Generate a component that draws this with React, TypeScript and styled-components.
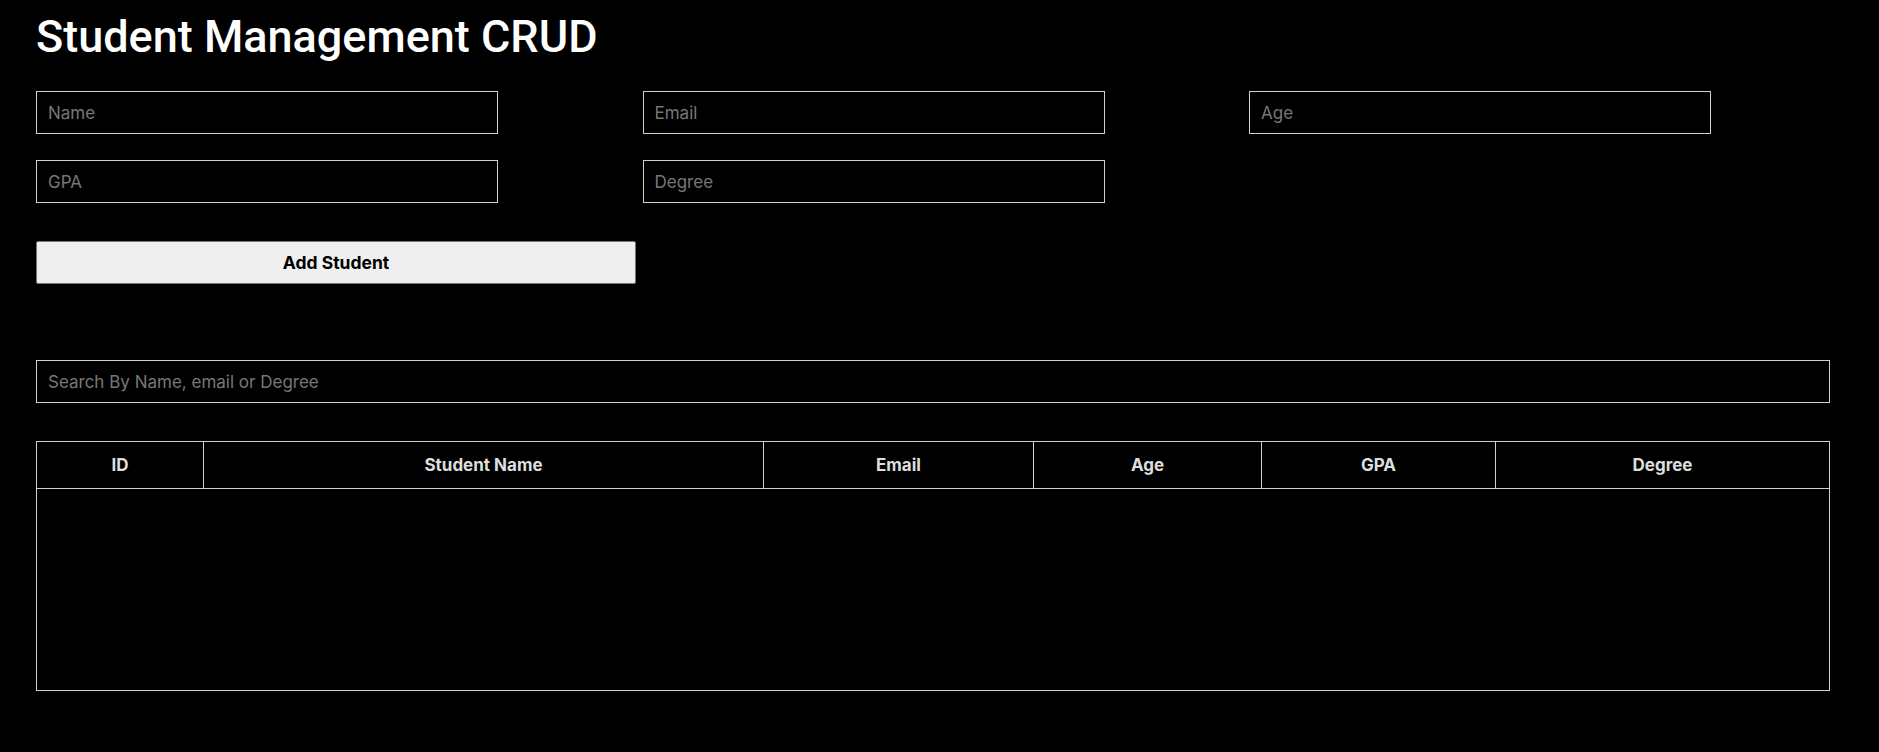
import React from "react";
import styled, { createGlobalStyle } from "styled-components";

const GlobalStyle = createGlobalStyle`
  html, body {
    margin: 0;
    padding: 0;
    background: #000;
  }
  body {
    font-family: Inter, "Liberation Sans", Arial, sans-serif;
    color: #fff;
  }
`;

const Page = styled.div`
  padding: 10px 49px 40px 36px;
  display: flex;
  flex-direction: column;
`;

const Title = styled.h1`
  margin: 0;
  font-family: Roboto, "Liberation Sans", Arial, sans-serif;
  font-size: 45px;
  font-weight: 500;
  line-height: 53px;
  color: #fff;
`;

const FormGrid = styled.div`
  margin-top: 28px;
  display: grid;
  grid-template-columns: repeat(3, 462px);
  column-gap: 144.5px;
  row-gap: 26px;
`;

const TextInput = styled.input<{ $wide?: boolean }>`
  box-sizing: border-box;
  width: ${(p) => (p.$wide ? "100%" : "462px")};
  height: 43px;
  padding: 0 11px;
  background: #000;
  border: 1px solid #cfcfcf;
  border-radius: 0;
  color: #fff;
  font-family: Inter, "Liberation Sans", Arial, sans-serif;
  font-size: 17px;
  outline: none;
  &::placeholder {
    color: #777;
  }
`;

const AddButton = styled.button`
  margin-top: 38px;
  box-sizing: border-box;
  width: 600px;
  height: 43px;
  background: #efefef;
  border: 1px solid #767676;
  border-radius: 2px;
  color: #000;
  font-family: Inter, "Liberation Sans", Arial, sans-serif;
  font-size: 17.5px;
  font-weight: 700;
  cursor: pointer;
`;

const SearchRow = styled.div`
  margin-top: 76px;
  display: flex;
`;

const TableFrame = styled.div`
  margin-top: 38px;
  box-sizing: border-box;
  height: 250px;
  border: 1px solid #cfcfcf;
`;

const Table = styled.table`
  width: 100%;
  table-layout: fixed;
  border-collapse: separate;
  border-spacing: 0;
`;

const Th = styled.th<{ $last?: boolean }>`
  padding: 0;
  line-height: 46px;
  border-bottom: 1px solid #cfcfcf;
  border-right: ${(p) => (p.$last ? "none" : "1px solid #cfcfcf")};
  font-family: Inter, "Liberation Sans", Arial, sans-serif;
  font-size: 17px;
  font-weight: 700;
  color: #dedede;
  text-align: center;
`;

const columns: { label: string; width: number }[] = [
  { label: "ID", width: 167 },
  { label: "Student Name", width: 560 },
  { label: "Email", width: 270 },
  { label: "Age", width: 228 },
  { label: "GPA", width: 234 },
  { label: "Degree", width: 333 },
];

export default function App() {
  return (
    <>
      <GlobalStyle />
      <Page>
        <Title>Student Management CRUD</Title>
        <FormGrid>
          <TextInput placeholder="Name" />
          <TextInput placeholder="Email" />
          <TextInput placeholder="Age" />
          <TextInput placeholder="GPA" />
          <TextInput placeholder="Degree" />
        </FormGrid>
        <div>
          <AddButton>Add Student</AddButton>
        </div>
        <SearchRow>
          <TextInput $wide placeholder="Search By Name, email or Degree" />
        </SearchRow>
        <TableFrame>
          <Table>
            <colgroup>
              {columns.map((c) => (
                <col key={c.label} style={{ width: c.width }} />
              ))}
            </colgroup>
            <thead>
              <tr>
                {columns.map((c, i) => (
                  <Th key={c.label} $last={i === columns.length - 1}>
                    {c.label}
                  </Th>
                ))}
              </tr>
            </thead>
            <tbody></tbody>
          </Table>
        </TableFrame>
      </Page>
    </>
  );
}
